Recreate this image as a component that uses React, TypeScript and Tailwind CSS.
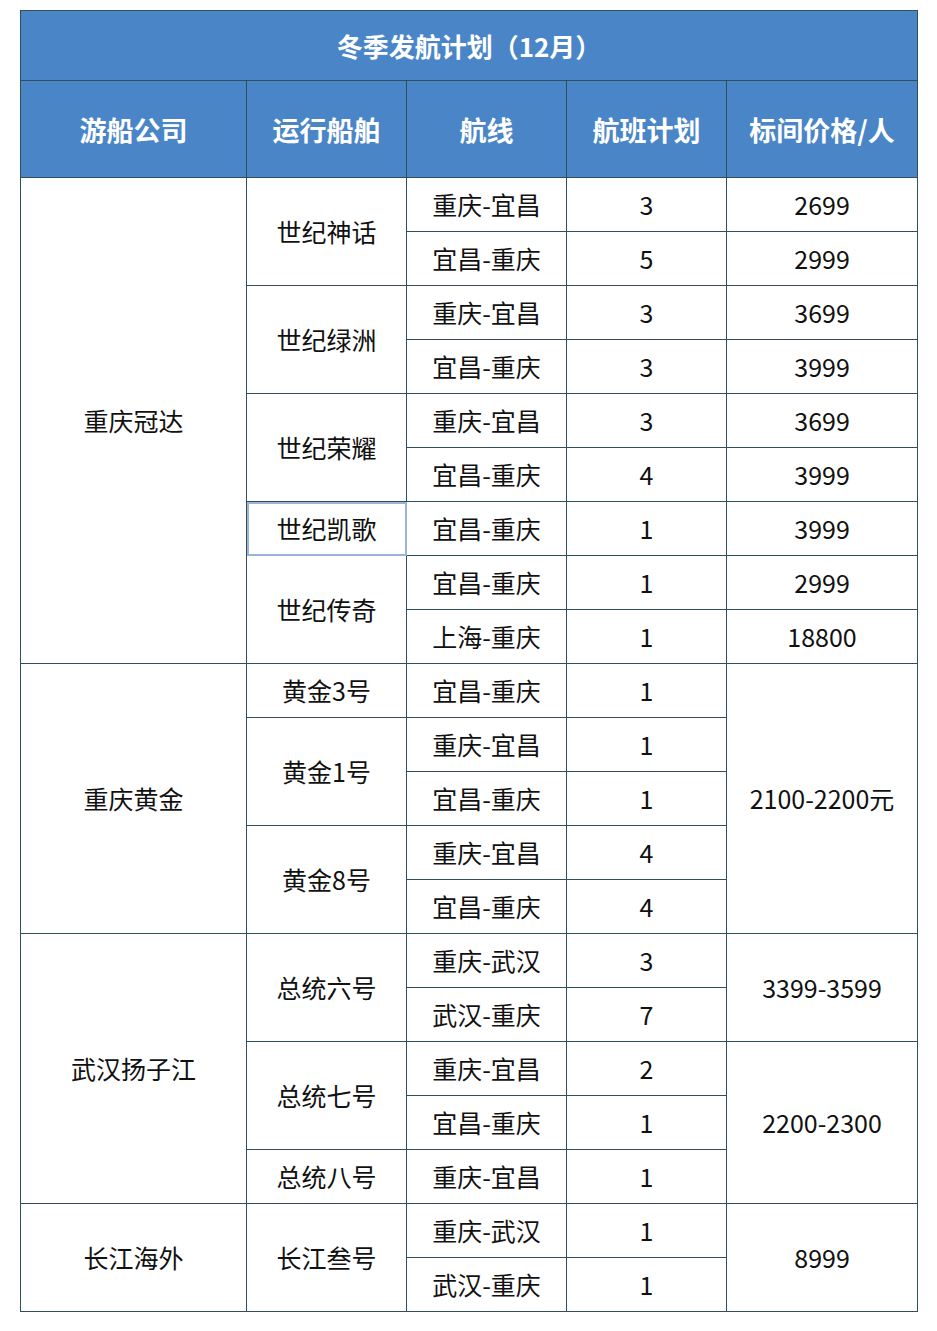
import React from 'react'

type Trip = { route: string; count: number; price?: string; priceSpan?: number }
type Ship = { name: string; trips: Trip[]; selected?: boolean }
type Company = { name: string; ships: Ship[] }

const companies: Company[] = [
    {
        name: '重庆冠达',
        ships: [
            { name: '世纪神话', trips: [{ route: '重庆-宜昌', count: 3, price: '2699' }, { route: '宜昌-重庆', count: 5, price: '2999' }] },
            { name: '世纪绿洲', trips: [{ route: '重庆-宜昌', count: 3, price: '3699' }, { route: '宜昌-重庆', count: 3, price: '3999' }] },
            { name: '世纪荣耀', trips: [{ route: '重庆-宜昌', count: 3, price: '3699' }, { route: '宜昌-重庆', count: 4, price: '3999' }] },
            { name: '世纪凯歌', selected: true, trips: [{ route: '宜昌-重庆', count: 1, price: '3999' }] },
            { name: '世纪传奇', trips: [{ route: '宜昌-重庆', count: 1, price: '2999' }, { route: '上海-重庆', count: 1, price: '18800' }] },
        ],
    },
    {
        name: '重庆黄金',
        ships: [
            { name: '黄金3号', trips: [{ route: '宜昌-重庆', count: 1, price: '2100-2200元', priceSpan: 5 }] },
            { name: '黄金1号', trips: [{ route: '重庆-宜昌', count: 1 }, { route: '宜昌-重庆', count: 1 }] },
            { name: '黄金8号', trips: [{ route: '重庆-宜昌', count: 4 }, { route: '宜昌-重庆', count: 4 }] },
        ],
    },
    {
        name: '武汉扬子江',
        ships: [
            { name: '总统六号', trips: [{ route: '重庆-武汉', count: 3, price: '3399-3599', priceSpan: 2 }, { route: '武汉-重庆', count: 7 }] },
            { name: '总统七号', trips: [{ route: '重庆-宜昌', count: 2, price: '2200-2300', priceSpan: 3 }, { route: '宜昌-重庆', count: 1 }] },
            { name: '总统八号', trips: [{ route: '重庆-宜昌', count: 1 }] },
        ],
    },
    {
        name: '长江海外',
        ships: [
            { name: '长江叁号', trips: [{ route: '重庆-武汉', count: 1, price: '8999', priceSpan: 2 }, { route: '武汉-重庆', count: 1 }] },
        ],
    },
]

const cell = 'border border-[#2f4f5c] text-center align-middle p-0 leading-none'

export default function App() {
    const rows: React.ReactNode[] = []

    companies.forEach((co, ci) => {
        const coSpan = co.ships.reduce((n, s) => n + s.trips.length, 0)
        co.ships.forEach((ship, si) => {
            ship.trips.forEach((trip, ti) => {
                rows.push(
                    <tr key={`${ci}-${si}-${ti}`} className="h-[54px]">
                        {si === 0 && ti === 0 && (
                            <td rowSpan={coSpan} className={cell}>{co.name}</td>
                        )}
                        {ti === 0 && (
                            <td
                                rowSpan={ship.trips.length}
                                className={`${cell} ${ship.selected ? 'outline outline-2 -outline-offset-2 outline-[#9bb3d6]' : ''}`}
                            >
                                {ship.name}
                            </td>
                        )}
                        <td className={cell}>{trip.route}</td>
                        <td className={cell}>{trip.count}</td>
                        {trip.price && (
                            <td rowSpan={trip.priceSpan ?? 1} className={cell}>{trip.price}</td>
                        )}
                    </tr>
                )
            })
        })
    })

    return (
        <div className="min-h-[1331px] bg-white pt-[10px] pl-[20px]" style={{ fontFamily: '"Noto Sans CJK SC", "Noto Sans", sans-serif' }}>
            <table className="border-collapse table-fixed w-[897px] text-[25px] text-[#111]">
                <colgroup>
                    <col className="w-[226px]" />
                    <col className="w-[160px]" />
                    <col className="w-[160px]" />
                    <col className="w-[160px]" />
                    <col className="w-[191px]" />
                </colgroup>
                <thead>
                    <tr className="h-[70px] bg-[#4a86c7]">
                        <th colSpan={5} className={`${cell} text-white text-[26px] font-bold`}>
                            冬季发航计划（12月）
                        </th>
                    </tr>
                    <tr className="h-[97px] bg-[#4a86c7]">
                        {['游船公司', '运行船舶', '航线', '航班计划', '标间价格/人'].map((h) => (
                            <th key={h} className={`${cell} text-white text-[27px] font-bold`}>
                                {h}
                            </th>
                        ))}
                    </tr>
                </thead>
                <tbody>{rows}</tbody>
            </table>
        </div>
    )
}
